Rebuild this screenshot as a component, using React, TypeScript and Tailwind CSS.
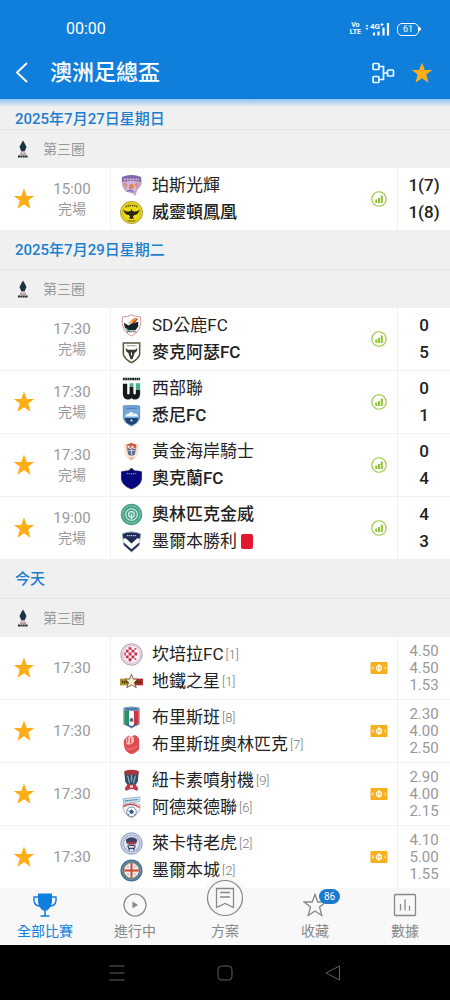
import { useState } from "react";
import type { ReactNode } from "react";

type Team = { name: string; crest: ReactNode; bold?: boolean; rank?: number; red?: boolean };
type Match = { time: string; done?: boolean; fav?: boolean; home: Team; away: Team; values: string[] };
type Group = { date: string; matches: Match[] };

function Crest({ children }: { children: ReactNode }) {
  return (
    <svg viewBox="0 0 24 24" className="size-[23px] shrink-0" aria-hidden="true">
      {children}
    </svg>
  );
}

const glory = (
  <Crest>
    <path d="M3 3Q12 0 21 3Q24 7 22 12L18 17L16 23L13 20Q7 20 4 16Q0 9 3 3Z" fill="#c9a3c4" />
    <path d="M2 3Q12 -1 22 3L22 8Q12 6 2 8Z" fill="#7a6aae" />
    <path d="M4 5.500h16" stroke="#e7b9c4" strokeWidth="1.800" strokeDasharray="2 1" />
    <circle cx="12" cy="13" r="6" fill="#cdb8e2" />
    <path d="M10 11l3-1 2 3-2 3-4-1z" fill="#de8552" />
    <path d="M5 9l3 2-2 4zM18 9l-3 2 3 4z" fill="#e08a58" />
    <path d="M7 18l4-1 3 2" stroke="#7562a8" fill="none" strokeWidth="1.300" />
  </Crest>
);
const phoenix = (
  <Crest>
    <circle cx="12" cy="12" r="11.500" fill="#efdb1b" stroke="#8f8420" strokeWidth="0.8" />
    <circle cx="12" cy="12" r="9.2" fill="none" stroke="#b6a615" strokeWidth="0.7" />
    <path d="M6 6Q12 3.500 18 6" stroke="#5a5210" strokeWidth="1.6" fill="none" strokeDasharray="1.500 0.700" />
    <path d="M3.500 9Q8 12 11 10.500L12 8l1 2.500Q16 12 20.500 9Q19 14.500 15 14.500l-1.500 1.500 1 2.500h-5l1-2.500-1.500-1.500Q5 14.500 3.500 9Z" fill="#2a270b" />
    <path d="M8 20.500Q12 21.500 16 20.500" stroke="#6a6214" fill="none" />
  </Crest>
);
const sd = (
  <Crest>
    <path d="M2.500 3Q8 3 12 1Q16 3 21.500 3Q23.500 18 12 23Q0.500 18 2.500 3Z" fill="#fff" stroke="#c98585" strokeWidth="0.9" />
    <path d="M4 9l5 3 3-2 7-2 0 5-3 4H9l-4-3z" fill="#17232c" />
    <path d="M11 8Q14 3 19 5L15 10Z" fill="#de3c2f" />
    <path d="M9 10L16 5" stroke="#eabb3c" strokeWidth="1.6" />
    <path d="M6 15l4 3" stroke="#3f9d62" strokeWidth="1.6" />
    <path d="M7 18.500h10" stroke="#333" strokeWidth="1.2" strokeDasharray="1.500 0.500" />
  </Crest>
);
const bulls = (
  <Crest>
    <path d="M3.500 2H20.500V14Q19 19 12 22.500Q5 19 3.500 14Z" fill="#fff" stroke="#57573c" strokeWidth="1.6" />
    <path d="M7 4.800h10" stroke="#77775c" strokeWidth="1.200" strokeDasharray="1 0.600" />
    <path d="M6 7Q8 10 9 9h6Q16 10 18 7Q18 12 15.500 12L13 19H11L8.500 12Q6 12 6 7Z" fill="#37372a" />
    <path d="M12 12v3" stroke="#fff" strokeWidth="1.2" />
  </Crest>
);
const western = (
  <Crest>
    <path d="M3 2h18" stroke="#1c2428" strokeWidth="2.6" strokeDasharray="2 0.400" />
    <path d="M3 7V18Q3.500 22 8 22Q11 22 12 19Q13 22 16 22Q20.500 22 21 18V12" fill="none" stroke="#14191c" strokeWidth="0" />
    <path d="M3 7H7.500V17.500Q8.500 19 10 17.500V10H14V17.500Q15.500 19 16.500 17.500V13H21V18Q20.500 23.500 15.500 23.500Q13 23.500 12 21.800Q11 23.500 8.500 23.500Q3.500 23.500 3 18Z" fill="#14191c" />
    <path d="M16.500 6.500H21V13H16.500ZM10 6.500H14V9.500H10Z" fill="#3db48b" />
  </Crest>
);
const sydney = (
  <Crest>
    <path d="M3.500 2Q12 1 20.500 2V15Q19 20 12 23Q5 20 3.500 15Z" fill="#73a8dc" stroke="#5e86ae" strokeWidth="0.9" />
    <path d="M6 4.500h12" stroke="#4f7fb5" strokeWidth="1.2" />
    <path d="M5 13Q7 10 9 10Q12 6 14 10Q18 9 19 13Z" fill="#edf5fb" />
    <path d="M5 14.500H19Q19 20 12 22Q5 20 5 14.500Z" fill="#1d4573" />
    <path d="M12 15.500l1.500 2.500H10.500z" fill="#dbe8f2" />
  </Crest>
);
const knights = (
  <Crest>
    <path d="M4 4Q8 5 12 2Q16 5 20 4L19 13Q17 19 12 22Q6 19 5 13Z" fill="#fae3d2" />
    <path d="M7 5L12 3l5 2v4H7Z" fill="#c8553f" />
    <path d="M8 6h2v2H8zM12 6h2v2h-2zM10 8h2v2h-2zM14 8h2v2h-2z" fill="#fff" />
    <path d="M7.500 9H16.500L15.500 15Q12 18 8.500 15Z" fill="#63708f" />
    <path d="M9 11h6M12 10v6" stroke="#dce0e8" strokeWidth="0.9" />
    <path d="M10 18l2 2 2-2" stroke="#ce7049" fill="none" />
  </Crest>
);
const auckland = (
  <Crest>
    <path d="M12 1L15 4Q19 4 22.500 5V13Q21 20 12 23Q3 20 1.500 13V5Q6 4 9 4Z" fill="#06067f" stroke="#262649" strokeWidth="0.8" />
    <path d="M7 6.500Q12 8 17 6.500" stroke="#8a8a70" fill="none" strokeWidth="1.3" strokeDasharray="1.500 0.700" />
  </Crest>
);
const olympic = (
  <Crest>
    <circle cx="12" cy="12" r="11.200" fill="#45a285" />
    <circle cx="12" cy="12" r="9" fill="none" stroke="#a5d6c5" strokeWidth="1" strokeDasharray="2 0.800" />
    <circle cx="12" cy="12" r="6" fill="none" stroke="#d9efe7" strokeWidth="1.1" />
    <circle cx="12" cy="12" r="3" fill="none" stroke="#e3f3ee" strokeWidth="1.200" />
    <path d="M12 11v6" stroke="#e3f3ee" strokeWidth="1.4" />
  </Crest>
);
const victory = (
  <Crest>
    <path d="M2.500 4Q12 0 21.500 4L20 16L12 23L4 16Z" fill="#1d2a55" stroke="#9aa0b3" strokeWidth="1" />
    <path d="M3.500 9L6 8.500L12 14L18 8.500L20.500 9V12.500L12 20L3.500 12.500Z" fill="#fff" />
    <path d="M7 5.800h10" stroke="#b9bfd4" strokeWidth="1.3" strokeDasharray="1.500 0.600" />
  </Crest>
);
const canberra = (
  <Crest>
    <circle cx="12" cy="12" r="11.200" fill="#f3e7ec" stroke="#b194ab" strokeWidth="1" />
    <circle cx="12" cy="12" r="9.300" fill="none" stroke="#a28fb3" strokeWidth="1" strokeDasharray="1 1" />
    <circle cx="12" cy="12" r="7.800" fill="#fff" />
    <path d="M6 7h3v3H6zM12 7h3v3h-3zM9 10h3v3H9zM15 10h3v3h-3zM6 13h3v3H6zM12 13h3v3h-3zM9 16h3v3H9zM9 4.500h3V7H9zM15 5.500h2V7h-2zM4.500 10H6v3H4.500zM15 16h2v1.500h-2z" fill="#cf2747" />
  </Crest>
);
const metro = (
  <Crest>
    <path d="M0 9H11V16H0Z" fill="#aa982b" />
    <path d="M13 9H24V16H13Z" fill="#b5282d" />
    <path d="M2 12.500h6M16 12.500h6" stroke="#52320f" strokeWidth="2.400" strokeDasharray="1.500 0.700" />
    <path d="M12 4.500L14 9.500H18.500L15 13L17 18.500L12 15.500L7 18.500L9 13L5.500 9.500H10Z" fill="#f6eed3" stroke="#5a3a1c" strokeWidth="0.800" />
  </Crest>
);
const brisbane = (
  <Crest>
    <path d="M4 2Q12 0 20 2V19Q16 20 12 23Q8 20 4 19Z" fill="#fff" stroke="#6f86a8" strokeWidth="1" />
    <path d="M4.500 5H9.500V20.500Q6 19 4.500 18.500Z" fill="#2b9163" />
    <path d="M14.500 5H19.500V18.500Q17 19 14.500 20.500Z" fill="#d33143" />
    <path d="M4.500 2.500Q12 0.500 19.500 2.500V5H4.500Z" fill="#4f79a8" />
    <circle cx="12" cy="14.500" r="2" fill="#4c688c" />
    <path d="M6 19.500Q9 20 12 22Q15 20 18 19.500" stroke="#315c94" strokeWidth="1.300" fill="none" />
  </Crest>
);
const brisOlympic = (
  <Crest>
    <path d="M5 6L9 2.500L12 4L15 2Q20 3 20 8L20 17Q16 22 11 22Q5 19 4.500 14Q3 9 5 6Z" fill="#e04b50" />
    <path d="M6 6L10 3L14 4L15 9L11 12H7Z" fill="#f6c6c6" />
    <path d="M8 5v5M11 5v6M15.500 4v7M7 12.500Q11 15 16 11" stroke="#e04b50" strokeWidth="1.100" fill="none" />
    <path d="M7 16Q12 19 18 13" stroke="#f08a8c" fill="none" />
  </Crest>
);
const jets = (
  <Crest>
    <path d="M4.500 3Q12 0 19.500 3L18.500 13L16 17H8L5.500 13Z" fill="#344b62" />
    <path d="M4.500 2Q12 -0.500 19.500 2L19 6H5Z" fill="#a8373c" />
    <path d="M8 7l2 8M16 7l-2 8M12 6v7" stroke="#8fb3d0" strokeWidth="1.300" />
    <path d="M8 16H16L19 20L18 23L14 21H10L6 23L5 20Z" fill="#b8404a" />
    <path d="M10.500 17h3v2.500h-3z" fill="#f3dede" />
  </Crest>
);
const adelaide = (
  <Crest>
    <path d="M3 3L21 1L20 6L4 8Z" fill="#d7e6f2" stroke="#7fa6c9" strokeWidth="0.800" />
    <path d="M5 5.200l14-1.600" stroke="#4379ab" strokeWidth="1.400" strokeDasharray="1.500 0.500" />
    <path d="M3 9Q12 6 21 9Q22 18 12 23Q2 18 3 9Z" fill="#f4f4f6" stroke="#b5a0a8" strokeWidth="0.800" />
    <path d="M3.500 11Q12 6 20.500 12" stroke="#c5414c" strokeWidth="1.500" fill="none" />
    <circle cx="12" cy="16.500" r="5" fill="#fff" stroke="#4c79a5" strokeWidth="0.900" />
    <path d="M12 14.500l2 1.500-1 2h-2l-1-2zM8 14.500l1 1M15.500 19.500l-1-1M8.500 20l1.500-1.500" fill="#2d578a" stroke="#2d578a" />
  </Crest>
);
const leichhardt = (
  <Crest>
    <circle cx="12" cy="12" r="11.200" fill="#c9d1e8" stroke="#8c98bf" strokeWidth="1" />
    <circle cx="12" cy="12" r="8.300" fill="#e6eaf5" stroke="#7d8bb3" strokeWidth="1.200" strokeDasharray="1 0.800" />
    <path d="M6 8Q12 3 18 8L17 12H7Z" fill="#3a4064" />
    <path d="M8 10H16V13H8Z" fill="#a33b4f" />
    <path d="M8 14l2 5M16 14l-2 5M9 14h6M10 17h4" stroke="#3c4569" strokeWidth="1.300" />
  </Crest>
);
const melbCity = (
  <Crest>
    <circle cx="12" cy="12" r="11.500" fill="#4a7090" />
    <circle cx="12" cy="12" r="9.500" fill="none" stroke="#9bb6bd" strokeWidth="1" strokeDasharray="1 1" />
    <circle cx="12" cy="12" r="7.800" fill="#f1e9e2" stroke="#c9b47c" strokeWidth="0.800" />
    <path d="M12 4.500V19.500M4.500 12H19.500" stroke="#cf4434" strokeWidth="2" />
    <path d="M8 8h1M15 8h1M8 16h1M15 16h1" stroke="#7ba3c9" strokeWidth="1.600" />
  </Crest>
);

const groups: Group[] = [
  {
    date: "2025年7月27日星期日",
    matches: [
      { time: "15:00", done: true, fav: true, home: { name: "珀斯光輝", crest: glory }, away: { name: "威靈頓鳳凰", crest: phoenix, bold: true }, values: ["1(7)", "1(8)"] },
    ],
  },
  {
    date: "2025年7月29日星期二",
    matches: [
      { time: "17:30", done: true, home: { name: "SD公鹿FC", crest: sd }, away: { name: "麥克阿瑟FC", crest: bulls, bold: true }, values: ["0", "5"] },
      { time: "17:30", done: true, fav: true, home: { name: "西部聯", crest: western }, away: { name: "悉尼FC", crest: sydney, bold: true }, values: ["0", "1"] },
      { time: "17:30", done: true, fav: true, home: { name: "黃金海岸騎士", crest: knights }, away: { name: "奧克蘭FC", crest: auckland, bold: true }, values: ["0", "4"] },
      { time: "19:00", done: true, fav: true, home: { name: "奧林匹克金威", crest: olympic, bold: true }, away: { name: "墨爾本勝利", crest: victory, red: true }, values: ["4", "3"] },
    ],
  },
  {
    date: "今天",
    matches: [
      { time: "17:30", fav: true, home: { name: "坎培拉FC", crest: canberra, rank: 1 }, away: { name: "地鐵之星", crest: metro, rank: 1 }, values: ["4.50", "4.50", "1.53"] },
      { time: "17:30", fav: true, home: { name: "布里斯班", crest: brisbane, rank: 8 }, away: { name: "布里斯班奧林匹克", crest: brisOlympic, rank: 7 }, values: ["2.30", "4.00", "2.50"] },
      { time: "17:30", fav: true, home: { name: "紐卡素噴射機", crest: jets, rank: 9 }, away: { name: "阿德萊德聯", crest: adelaide, rank: 6 }, values: ["2.90", "4.00", "2.15"] },
      { time: "17:30", fav: true, home: { name: "萊卡特老虎", crest: leichhardt, rank: 2 }, away: { name: "墨爾本城", crest: melbCity, rank: 2 }, values: ["4.10", "5.00", "1.55"] },
    ],
  },
];

const starPath = "M12 1.500L14.800 9H22.300L16.300 13.600L18.500 21.800L12 17.300L5.500 21.800L7.700 13.600L1.700 9H9.200Z";

function Star() {
  return (
    <svg viewBox="0 0 24 24" className="size-6" aria-hidden="true">
      <path d={starPath} fill="#fdae16" />
    </svg>
  );
}

function StatusBar() {
  return (
    <div className="flex h-6 items-center pr-[29px] pl-[66px]">
      <span className="flex-1 text-base">00:00</span>
      <span className="mr-1 flex flex-col text-center text-[7px] leading-[7px] font-bold">
        <span>Vo</span>
        <span>LTE</span>
      </span>
      <svg viewBox="0 0 25 14" className="mr-[7px] h-3.5 w-[25px]" aria-label="4G+" role="img">
        <path d="M0.500 4.500L2 2.500L3.500 4.500ZM0.500 6L2 8L3.500 6Z" fill="#fff" />
        <text x="5" y="7" fontSize="8" fontWeight="700" fill="#fff">4G</text>
        <path d="M15.500 2.500h3M17 1v3" stroke="#fff" />
        <path d="M9 13.500v-3M13.500 13.500v-4M18.500 13.500v-8M23 13.500V1" stroke="#fff" strokeWidth="2.200" />
      </svg>
      <span className="flex h-[13px] w-[22px] items-center justify-center rounded-[5px] border border-white text-[9px] leading-none">
        61
      </span>
      <span className="h-1 w-0.5 rounded-r bg-white" />
    </div>
  );
}

function Header() {
  return (
    <header className="shrink-0 bg-[#107edb] pt-[17px] text-white">
      <StatusBar />
      <div className="mt-1.5 flex h-[52px] items-center pr-3 pl-2.5">
        <button type="button" aria-label="返回" className="flex size-6 items-center justify-center">
          <svg viewBox="0 0 24 24" className="size-6" fill="none" stroke="#fff" strokeWidth="1.900" aria-hidden="true">
            <path d="M17 2L7 11.500L17 21" />
          </svg>
        </button>
        <h1 className="ml-4 flex-1 text-[22px] leading-8 font-medium">澳洲足總盃</h1>
        <button type="button" aria-label="賽程圖" className="mr-3.5">
          <svg viewBox="0 0 26 24" className="h-6 w-[26px]" fill="none" stroke="#e9fbff" strokeWidth="1.700" aria-hidden="true">
            <rect x="3" y="2.500" width="6" height="6" rx="1" />
            <rect x="3" y="15.500" width="6" height="6" rx="1" />
            <rect x="17.500" y="9" width="6" height="6" rx="1" />
            <path d="M9 5.500H13.500V18.500H9M13.500 12H17.500" />
          </svg>
        </button>
        <button type="button" aria-label="收藏賽事" className="mr-1">
          <Star />
        </button>
      </div>
    </header>
  );
}

function League() {
  return (
    <div className="flex h-[38px] items-center gap-2.5 pl-[13px] text-sm text-[#999]">
      <svg viewBox="0 0 20 20" className="size-5" aria-hidden="true">
        <path d="M10 1.500L11.500 4L13.500 8L11.800 12H8.200L6.500 8L8.500 4Z" fill="#1b3540" />
        <path d="M8.500 12H11.500L13.500 16H6.500Z" fill="#b59aa2" />
        <path d="M8.500 14h3" stroke="#f2f2f2" />
        <path d="M5 17.500H15" stroke="#22272b" strokeWidth="1.800" strokeDasharray="2 0.400" />
      </svg>
      <h3>第三圈</h3>
    </div>
  );
}

function TeamLine({ team }: { team: Team }) {
  return (
    <div className="flex h-[27px] items-center">
      {team.crest}
      <span className={team.bold ? "ml-[9px] font-medium" : "ml-[9px]"}>{team.name}</span>
      {team.rank && <span className="ml-0.5 text-[13px] font-light text-[#777]">[{team.rank}]</span>}
      {team.red && <span className="ml-1 h-[15px] w-3 rounded-xs bg-[#e3172f]" />}
    </div>
  );
}

function MatchRow({ match }: { match: Match }) {
  const [fav, setFav] = useState(!!match.fav);
  return (
    <li className="box-content flex h-[62px] items-stretch">
      <div className="flex w-[111px] shrink-0 items-center border-r border-[#f1f1f1]">
        <button type="button" aria-label="收藏" aria-pressed={fav} onClick={() => setFav(!fav)} className="flex h-full w-12 items-center justify-center">
          {fav && <Star />}
        </button>
        <div className="w-12 text-center text-[15px] leading-5 text-[#999]">
          <div>{match.time}</div>
          {match.done && <div className="text-sm leading-5">完場</div>}
        </div>
      </div>
      <div className="flex min-w-0 flex-1 flex-col justify-center pl-[9px] text-[17px] leading-[27px] whitespace-nowrap text-[#222]">
        <TeamLine team={match.home} />
        <TeamLine team={match.away} />
      </div>
      <div className="flex w-9 shrink-0 items-center justify-center">
        {match.done ? (
          <svg viewBox="0 0 16 16" className="size-4" aria-label="統計" role="img">
            <circle cx="8" cy="8" r="7.200" fill="#fff" stroke="#94c63d" strokeWidth="1.100" />
            <path d="M5.300 12V8.500M8 12V7M10.800 12V4.500" stroke="#8cc52b" strokeWidth="2" />
          </svg>
        ) : (
          <svg viewBox="0 0 18 12" className="h-3 w-[18px]" aria-label="賠率" role="img">
            <rect x="0.500" width="17" height="12" rx="1" fill="#f9ae1c" />
            <ellipse cx="9" cy="6" rx="2.600" ry="2.300" fill="none" stroke="#fff" strokeWidth="1.300" />
            <path d="M9 2v8" stroke="#fff" strokeWidth="1.300" />
            <path d="M2.800 4.500v3M15.200 4.500v3" stroke="#ffefc9" strokeWidth="1.200" />
          </svg>
        )}
      </div>
      <div
        className={
          match.done
            ? "flex w-[53px] shrink-0 flex-col justify-center border-l border-[#f1f1f1] text-center text-[17px] leading-[27px] font-medium text-[#222]"
            : "flex w-[53px] shrink-0 flex-col justify-center border-l border-[#f1f1f1] text-center text-[15px] leading-[17px] text-[#999]"
        }
      >
        {match.values.map((v, i) => (
          <div key={i}>{v}</div>
        ))}
      </div>
    </li>
  );
}

const tabs: { label: string; icon: ReactNode; badge?: number; raised?: boolean }[] = [
  {
    label: "全部比賽",
    icon: (
      <svg viewBox="0 0 24 24" className="size-6" fill="none" stroke="currentColor" aria-hidden="true">
        <path d="M5 0.500H19V9Q18 15 14 17.500H10Q6 15 5 9Z" fill="currentColor" stroke="none" />
        <path d="M5 4H1V8Q2 13 7 13M19 4H23V8Q22 13 17 13" strokeWidth="1.400" />
        <path d="M12 16V23M7.500 23H16.500" strokeWidth="1.600" />
      </svg>
    ),
  },
  {
    label: "進行中",
    icon: (
      <svg viewBox="0 0 24 24" className="size-6" fill="none" stroke="currentColor" aria-hidden="true">
        <circle cx="12" cy="12" r="11" strokeWidth="1.200" />
        <path d="M9.500 8.500L15 12L9.500 15.500Z" fill="currentColor" stroke="none" />
      </svg>
    ),
  },
  {
    label: "方案",
    raised: true,
    icon: (
      <svg viewBox="0 0 46 46" className="size-[46px]" fill="none" stroke="currentColor" aria-hidden="true">
        <circle cx="23" cy="23" r="22.500" fill="#f8f8f8" stroke="none" />
        <circle cx="23" cy="23" r="17.500" strokeWidth="1.200" />
        <path d="M14.500 13.500H31.500V32.500L23 28.500L14.500 32.500ZM18 17.500H28M18 22H28" strokeWidth="1.300" />
      </svg>
    ),
  },
  {
    label: "收藏",
    badge: 86,
    icon: (
      <svg viewBox="0 0 24 24" className="size-6" fill="none" stroke="currentColor" aria-hidden="true">
        <path d="M12 1.500L14.800 9H22.800L16.500 14L18.800 22.500L12 18L5.200 22.500L7.500 14L1.200 9H9.200Z" strokeWidth="1.300" />
      </svg>
    ),
  },
  {
    label: "數據",
    icon: (
      <svg viewBox="0 0 24 24" className="size-6" fill="none" stroke="currentColor" aria-hidden="true">
        <rect x="1.500" y="1.500" width="21" height="21" rx="1" strokeWidth="1.300" />
        <path d="M7.500 11V17.500M12 6.500V17.500M16.500 13V17.500" strokeWidth="1.300" />
      </svg>
    ),
  },
];

function TabBar() {
  return (
    <nav className="relative z-10 grid h-[57px] shrink-0 grid-cols-5 bg-[#f8f8f8]">
      {tabs.map((tab, i) => (
        <a key={tab.label} href="#" className={i === 0 ? "flex flex-col items-center pt-[5px] text-[#107edb]" : "flex flex-col items-center pt-[5px] text-[#888]"}>
          <span className="relative flex h-6 w-6 justify-center">
            {tab.raised ? <span className="absolute -bottom-1">{tab.icon}</span> : tab.icon}
            {tab.badge && (
              <span className="absolute -top-1 left-4 flex h-[15px] items-center rounded-full bg-[#1a7ad0] px-[5px] text-[10px] leading-none text-white">{tab.badge}</span>
            )}
          </span>
          <span className="relative mt-1 text-sm leading-5">{tab.label}</span>
        </a>
      ))}
    </nav>
  );
}

function SystemBar() {
  return (
    <div className="flex h-[55px] shrink-0 items-center justify-center gap-[92px] bg-black text-[#606060]">
      <button type="button" aria-label="選單">
        <svg viewBox="0 0 16 16" className="size-4" stroke="currentColor" aria-hidden="true">
          <path d="M0.500 1H15.500M0.500 8H15.500M0.500 15H15.500" />
        </svg>
      </button>
      <button type="button" aria-label="主畫面">
        <svg viewBox="0 0 16 16" className="size-4" stroke="currentColor" fill="none" aria-hidden="true">
          <rect x="1" y="1" width="14" height="14" rx="3.500" />
        </svg>
      </button>
      <button type="button" aria-label="上一頁">
        <svg viewBox="0 0 16 16" className="size-4" stroke="currentColor" fill="none" strokeLinejoin="round" aria-hidden="true">
          <path d="M14.500 1V15L1 8Z" />
        </svg>
      </button>
    </div>
  );
}

export default function App() {
  return (
    <div className="flex h-dvh flex-col bg-[#f0f0f0] font-[Roboto,'Noto_Sans_CJK_TC',sans-serif]">
      <Header />
      <main className="min-h-0 flex-1 overflow-y-auto bg-linear-to-b from-[#8fc2f0] to-[#f0f0f0] to-[8px] [scrollbar-width:none]">
        {groups.map((group, i) => (
          <section key={group.date}>
            <h2
              className={
                i === 0
                  ? "flex h-[31px] items-end border-b border-[#e6e6e6] pl-[15px] text-[15px] leading-5 font-medium text-[#1c7fcd]"
                  : "flex h-10 items-center border-b border-[#e6e6e6] pl-[15px] text-[15px] leading-5 font-medium text-[#1c7fcd]"
              }
            >
              {group.date}
            </h2>
            <League />
            <ul className="divide-y divide-[#f0f0f0] bg-white">
              {group.matches.map((m) => (
                <MatchRow key={m.home.name} match={m} />
              ))}
            </ul>
          </section>
        ))}
      </main>
      <TabBar />
      <SystemBar />
    </div>
  );
}
